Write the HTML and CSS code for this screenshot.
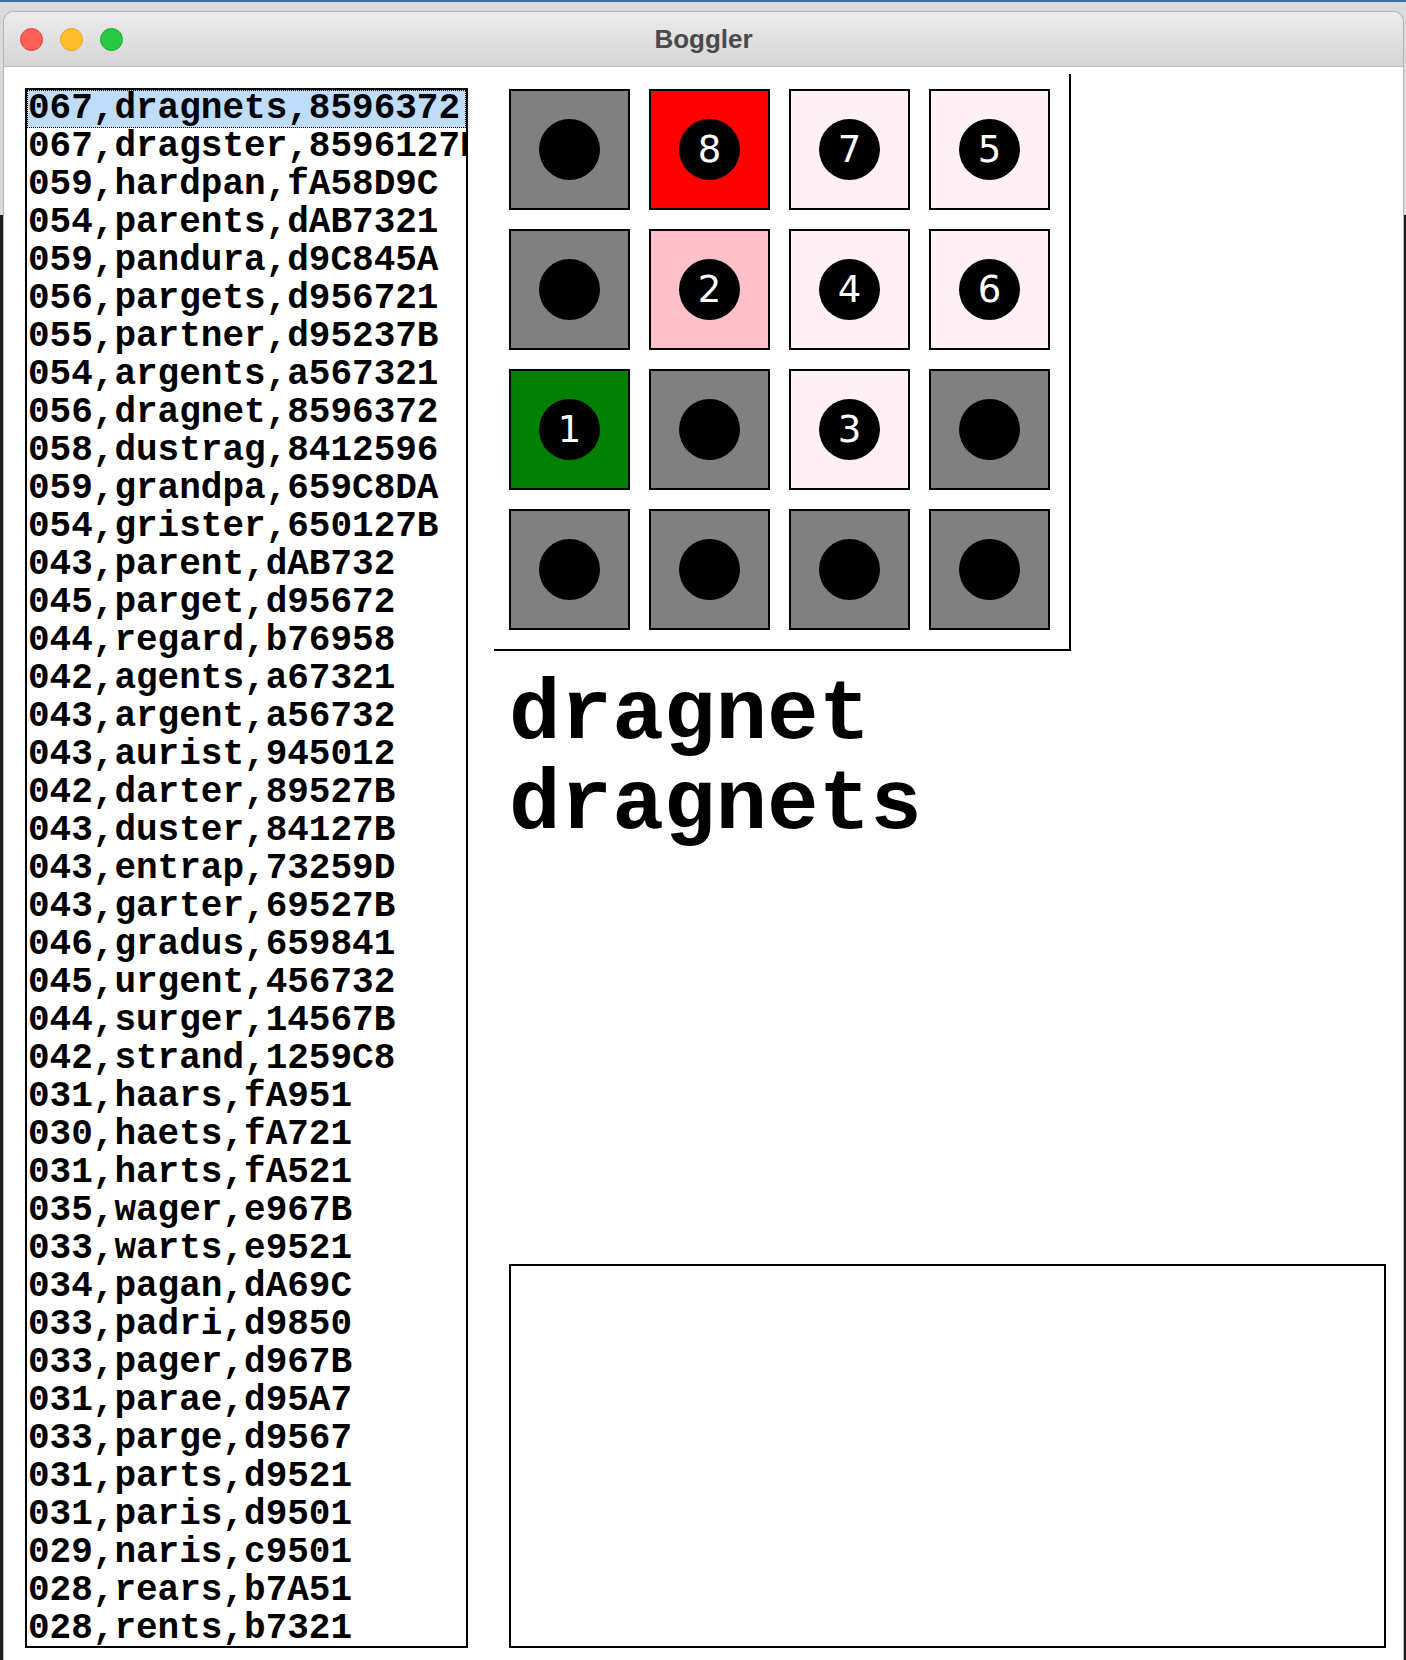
FILE: index.html
```html
<!DOCTYPE html>
<html>
<head>
<meta charset="utf-8">
<title>Boggler</title>
<link rel="stylesheet" href="styles.css">
</head>
<body>
<div class="window">
  <div class="titlebar">
    <div class="lights">
      <span class="light red"></span>
      <span class="light yellow"></span>
      <span class="light green"></span>
    </div>
    <div class="title">Boggler</div>
    <div></div>
  </div>
  <div class="content">
    <div class="list">
      <div class="row selected">067,dragnets,8596372</div>
      <div class="row">067,dragster,8596127B</div>
      <div class="row">059,hardpan,fA58D9C</div>
      <div class="row">054,parents,dAB7321</div>
      <div class="row">059,pandura,d9C845A</div>
      <div class="row">056,pargets,d956721</div>
      <div class="row">055,partner,d95237B</div>
      <div class="row">054,argents,a567321</div>
      <div class="row">056,dragnet,8596372</div>
      <div class="row">058,dustrag,8412596</div>
      <div class="row">059,grandpa,659C8DA</div>
      <div class="row">054,grister,650127B</div>
      <div class="row">043,parent,dAB732</div>
      <div class="row">045,parget,d95672</div>
      <div class="row">044,regard,b76958</div>
      <div class="row">042,agents,a67321</div>
      <div class="row">043,argent,a56732</div>
      <div class="row">043,aurist,945012</div>
      <div class="row">042,darter,89527B</div>
      <div class="row">043,duster,84127B</div>
      <div class="row">043,entrap,73259D</div>
      <div class="row">043,garter,69527B</div>
      <div class="row">046,gradus,659841</div>
      <div class="row">045,urgent,456732</div>
      <div class="row">044,surger,14567B</div>
      <div class="row">042,strand,1259C8</div>
      <div class="row">031,haars,fA951</div>
      <div class="row">030,haets,fA721</div>
      <div class="row">031,harts,fA521</div>
      <div class="row">035,wager,e967B</div>
      <div class="row">033,warts,e9521</div>
      <div class="row">034,pagan,dA69C</div>
      <div class="row">033,padri,d9850</div>
      <div class="row">033,pager,d967B</div>
      <div class="row">031,parae,d95A7</div>
      <div class="row">033,parge,d9567</div>
      <div class="row">031,parts,d9521</div>
      <div class="row">031,paris,d9501</div>
      <div class="row">029,naris,c9501</div>
      <div class="row">028,rears,b7A51</div>
      <div class="row">028,rents,b7321</div>
    </div>
    <div class="right">
      <div class="board">
        <div class="tile gray"><span class="dot"></span></div>
        <div class="tile red"><span class="dot">8</span></div>
        <div class="tile blush"><span class="dot">7</span></div>
        <div class="tile blush"><span class="dot">5</span></div>
        <div class="tile gray"><span class="dot"></span></div>
        <div class="tile pink"><span class="dot">2</span></div>
        <div class="tile blush"><span class="dot">4</span></div>
        <div class="tile blush"><span class="dot">6</span></div>
        <div class="tile green"><span class="dot">1</span></div>
        <div class="tile gray"><span class="dot"></span></div>
        <div class="tile blush"><span class="dot">3</span></div>
        <div class="tile gray"><span class="dot"></span></div>
        <div class="tile gray"><span class="dot"></span></div>
        <div class="tile gray"><span class="dot"></span></div>
        <div class="tile gray"><span class="dot"></span></div>
        <div class="tile gray"><span class="dot"></span></div>
      </div>
      <div class="words">
        <div>dragnet</div>
        <div>dragnets</div>
      </div>
      <div class="notes"></div>
    </div>
  </div>
</div>
</body>
</html>
```

FILE: styles.css
```css
html, body {
  margin: 0;
  padding: 0;
  height: 100%;
  overflow: hidden;
}

body {
  background: linear-gradient(to bottom,
    #3f6d98 0, #3f6d98 2px,
    #d8dade 2px, #d8dade 215px,
    #1d1d1d 215px);
  padding-top: 11px;
  box-sizing: border-box;
}

.window {
  margin-left: 3px;
  width: 1401px;
  box-sizing: border-box;
  height: calc(100vh - 11px);
  background: #ffffff;
  border: 1px solid #b3b3b3;
  border-bottom: none;
  border-radius: 11px 11px 0 0;
  overflow: hidden;
}

.titlebar {
  height: 54px;
  border-bottom: 1px solid #bcbcbc;
  background: linear-gradient(to bottom, #ececec, #d5d5d5);
  display: grid;
  grid-template-columns: 1fr auto 1fr;
  align-items: center;
}

.lights {
  display: flex;
  gap: 17px;
  padding-left: 16px;
  padding-top: 1px;
}

.light {
  width: 23px;
  height: 23px;
  border-radius: 50%;
  box-sizing: border-box;
}

.light.red { background: #fe5f57; border: 1px solid #e2463f; }
.light.yellow { background: #febc2e; border: 1px solid #e1a325; }
.light.green { background: #28c840; border: 1px solid #1fab31; }

.title {
  font-family: "Liberation Sans", Arial, sans-serif;
  font-weight: bold;
  font-size: 26px;
  color: #4a4a4a;
  padding-top: 1px;
}

.content {
  display: flex;
  align-items: stretch;
  padding-left: 21px;
}

.list {
  margin-top: 21px;
  width: 443px;
  height: 1560px;
  box-sizing: border-box;
  border: 2px solid #000;
  overflow: hidden;
  font-family: "Liberation Mono", "Courier New", monospace;
  font-weight: bold;
  font-size: 36px;
  line-height: 38px;
  color: #000;
}

.row {
  height: 38px;
  white-space: nowrap;
  padding-left: 1px;
  box-sizing: border-box;
}

.row.selected {
  background: #bfdcfb;
  outline: 1px dotted #000;
  outline-offset: -1px;
}

.right {
  margin-left: 26px;
  padding-top: 7px;
  padding-right: 17px;
  flex: 1;
  display: flex;
  flex-direction: column;
}

.board {
  align-self: flex-start;
  display: grid;
  grid-template-columns: repeat(4, 121px);
  grid-auto-rows: 121px;
  gap: 19px;
  padding: 15px 19px 19px 15px;
  border-right: 2px solid #000;
  border-bottom: 2px solid #000;
}

.tile {
  box-sizing: border-box;
  border: 2px solid #000;
  display: flex;
  align-items: center;
  justify-content: center;
}

.tile.gray { background: #808080; }
.tile.red { background: #ff0000; }
.tile.pink { background: #ffc0cb; }
.tile.blush { background: #fff0f5; }
.tile.green { background: #008000; }

.dot {
  width: 61px;
  height: 61px;
  border-radius: 50%;
  background: #000;
  color: #fff;
  display: flex;
  align-items: center;
  justify-content: center;
  font-family: "DejaVu Sans", Verdana, sans-serif;
  font-size: 37px;
  line-height: 1;
}

.words {
  margin: 19px 0 0 15px;
  font-family: "Liberation Mono", "Courier New", monospace;
  font-weight: bold;
  font-size: 86px;
  line-height: 90px;
  color: #000;
}

.notes {
  margin-top: auto;
  margin-left: 15px;
  height: 384px;
  box-sizing: border-box;
  border: 2px solid #000;
}
```
